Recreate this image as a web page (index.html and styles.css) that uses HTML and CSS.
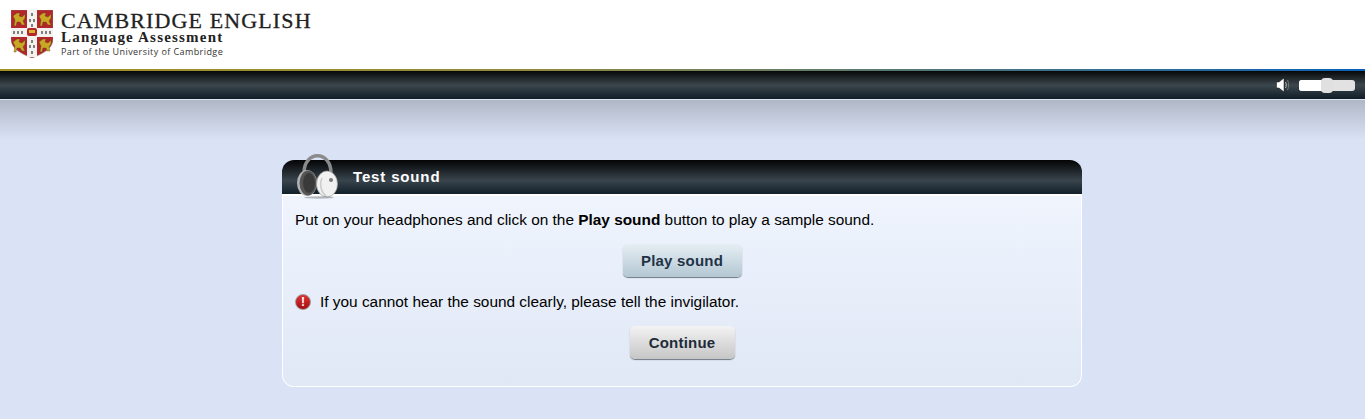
FILE: index.html
```html
<!DOCTYPE html>
<html lang="en">
<head>
    <meta charset="UTF-8">
    <title>Test sound</title>
    <link rel="stylesheet" href="styles.css">
</head>
<body>
    <header class="brand">
        <svg class="crest" width="42" height="48" viewBox="0 0 42 48">
            <path d="M0 0H42V29C42 39 31 44 21 48C11 44 0 39 0 29Z" fill="#b3262b" stroke="#8a7a6a" stroke-width=".5"/>
            <rect x="16" y="0" width="10" height="47" fill="#f4f2ee"/>
            <rect x="0" y="18" width="42" height="9" fill="#f4f2ee"/>
            <path d="M21 3v3M19 9v3M23 9v3M21 14v3M21 30v3M19 35v3M23 35v3M21 41v3" stroke="#333" stroke-width="1.200"/>
            <path d="M3 21v3M7 21v3M11 21v3M31 21v3M35 21v3M39 21v3" stroke="#333" stroke-width="1.200"/>
            <rect x="16" y="18" width="10" height="8" rx="2" fill="#b3262b"/>
            <rect x="18" y="20" width="6" height="3" fill="#d9b52a"/>
            <g fill="#c9a826" stroke="#5a4a12" stroke-width=".4">
                <path d="M2 6L6 3H9L8 6L11 7L14 4L14 8L12 11L14 15H11L9 12L6 12L5 16H3L4 10Z"/>
                <path d="M28 6L32 3H35L34 6L37 7L40 4L40 8L38 11L40 15H37L35 12L32 12L31 16H29L30 10Z"/>
                <path d="M2 32L6 29H9L8 32L11 33L14 30L14 34L12 37L14 41H11L9 38L6 38L5 42H3L4 36Z"/>
                <path d="M28 32L32 29H35L34 32L37 33L40 30L40 34L38 37L39 41H36L35 38L32 38L31 42H29L30 36Z"/>
            </g>
        </svg>
        <div class="brand-text">
            <div class="brand-name">CAMBRIDGE ENGLISH</div>
            <div class="brand-sub">Language Assessment</div>
            <div class="brand-part">Part of the University of Cambridge</div>
        </div>
    </header>

    <div class="stripe"></div>
    <div class="toolbar">
        <svg class="speaker" width="14" height="16" viewBox="0 0 14 16">
            <path d="M0.500 5H3L8 1V15L3 11H0.500Z" fill="#fff" stroke="#111" stroke-width=".5"/>
            <path d="M9.500 5C10.500 7 10.500 9 9.500 11" fill="none" stroke="#bbb" stroke-width="1"/>
            <path d="M11.500 3C13 6 13 10 11.500 13" fill="none" stroke="#777" stroke-width="1"/>
        </svg>
        <div class="volume">
            <div class="volume-fill"></div>
            <div class="volume-knob"></div>
        </div>
    </div>

    <main class="page">
        <section class="panel">
            <div class="panel-head">
                <svg class="phones" width="44" height="46" viewBox="0 0 44 46">
                    <path d="M8 20C8 -3 35 -3 35 20" fill="none" stroke="#8b8b8b" stroke-width="3.500"/>
                    <ellipse cx="11" cy="30" rx="10" ry="13" fill="#b5b5b5"/>
                    <ellipse cx="12" cy="30" rx="8.500" ry="12.500" fill="#555"/>
                    <ellipse cx="13" cy="30" rx="6" ry="10" fill="#3a3a3a"/>
                    <ellipse cx="31" cy="31" rx="10.500" ry="13" fill="#f1f1f1" stroke="#999" stroke-width=".7"/>
                    <circle cx="35" cy="27" r="2" fill="#777"/>
                    <path d="M26 25C23 31 25 39 30 43" fill="none" stroke="#ccc" stroke-width="1.500"/>
                    <ellipse cx="23" cy="44.500" rx="15" ry="1.200" fill="#000" opacity=".25"/>
                </svg>
                <h1>Test sound</h1>
            </div>
            <div class="panel-body">
                <p class="intro">Put on your headphones and click on the <b>Play sound</b> button to play a sample sound.</p>
                <div class="btn-row"><button class="btn btn-play">Play sound</button></div>
                <p class="warning">
                    <span class="warn-icon">!</span>
                    If you cannot hear the sound clearly, please tell the invigilator.
                </p>
                <div class="btn-row"><button class="btn btn-continue">Continue</button></div>
            </div>
        </section>
    </main>
</body>
</html>
```

FILE: styles.css
```css
html, body {
    margin: 0;
    padding: 0;
}
body {
    font-family: "Liberation Sans", Arial, sans-serif;
    font-size: 15.4px;
    color: #000;
    background-color: #dae3f5;
    height: 419px;
    overflow: hidden;
}
.brand {
    height: 69px;
    background-color: #fff;
    display: flex;
    align-items: flex-start;
    padding-left: 11px;
    box-sizing: border-box;
    padding-top: 10px;
}
.crest {
    margin-right: 8px;
}
.brand-text {
    color: #222;
    font-family: "Liberation Serif", serif;
    margin-top: 1px;
}
.brand-name {
    font-size: 22px;
    line-height: 19px;
    letter-spacing: 1.12px;
    -webkit-text-stroke: 0.3px #222;
}
.brand-sub {
    font-size: 15px;
    line-height: 15px;
    font-weight: bold;
    letter-spacing: 1.2px;
}
.brand-part {
    font-family: "Open Sans", sans-serif;
    font-size: 9px;
    line-height: 14px;
    color: #333;
    letter-spacing: 0.42px;
}
.stripe {
    height: 2px;
    background: linear-gradient(to right, #a39224 0%, #8f8a40 40%, #0b62b8 100%);
}
.toolbar {
    height: 28px;
    border-bottom: 1px solid #dfe5f0;
    background: linear-gradient(to bottom, #060809 0%, #3c464d 50%, #101d27 100%);
    display: flex;
    align-items: center;
    justify-content: flex-end;
    padding-right: 10px;
}
.speaker {
    margin-right: 9px;
}
.volume {
    position: relative;
    width: 56px;
    height: 11px;
    border-radius: 3px;
    background-color: #e2e2e2;
}
.volume-fill {
    width: 24px;
    height: 11px;
    background-color: #fff;
    border-radius: 3px 0 0 3px;
}
.volume-knob {
    position: absolute;
    left: 22px;
    top: -2px;
    width: 12px;
    height: 15px;
    border-radius: 4px;
    background-color: #e0e0e0;
}
.page {
    height: 319px;
    box-sizing: border-box;
    padding: 60px 1px 0 0;
    background: linear-gradient(to bottom, #b0b8c7 0px, #dae3f5 40px);
    display: flex;
    justify-content: center;
}
.panel {
    width: 800px;
    height: 227px;
}
.panel-head {
    height: 34px;
    border-radius: 12px 12px 0 0;
    background: linear-gradient(to bottom, #030405 0%, #39444c 60%, #12202b 100%);
    position: relative;
    display: flex;
    align-items: center;
}
.phones {
    position: absolute;
    left: 14px;
    top: -7px;
}
.panel-head h1 {
    margin: -2px 0 0 71px;
    color: #fff;
    font-size: 15px;
    font-weight: bold;
    letter-spacing: 0.85px;
}
.panel-body {
    height: 193px;
    box-sizing: border-box;
    border: 1px solid #fff;
    border-top-width: 2px;
    border-radius: 0 0 12px 12px;
    background: linear-gradient(to bottom, #eff4fd 0%, #e0e8f6 100%);
    padding: 14px 12px 0;
}
.intro {
    margin: 0;
    line-height: 19px;
}
.btn-row {
    display: flex;
    justify-content: center;
}
.btn {
    font-family: "Liberation Sans", Arial, sans-serif;
    font-size: 15px;
    font-weight: bold;
    letter-spacing: 0.2px;
    color: #1f3347;
    height: 33px;
    border: none;
    border-radius: 5px;
    box-shadow: 0 1px 1px #6f7983;
}
.btn-play {
    width: 119px;
    margin-top: 15px;
    background: linear-gradient(to bottom, #e6eef4 0%, #b3c7d2 100%);
}
.btn-continue {
    width: 105px;
    margin-top: 15px;
    color: #1e2c38;
    background: linear-gradient(to bottom, #f3f3f3 0%, #c6c6c6 100%);
}
.warning {
    margin: 15px 0 0;
    line-height: 19px;
    display: flex;
    align-items: center;
}
.warn-icon {
    width: 16px;
    height: 16px;
    border-radius: 50%;
    background: linear-gradient(to bottom, #d33 0%, #a80e12 100%);
    border: 1px solid #999;
    box-sizing: border-box;
    color: #fff;
    font-size: 12px;
    font-weight: bold;
    line-height: 14px;
    text-align: center;
    margin-right: 9px;
}
```
